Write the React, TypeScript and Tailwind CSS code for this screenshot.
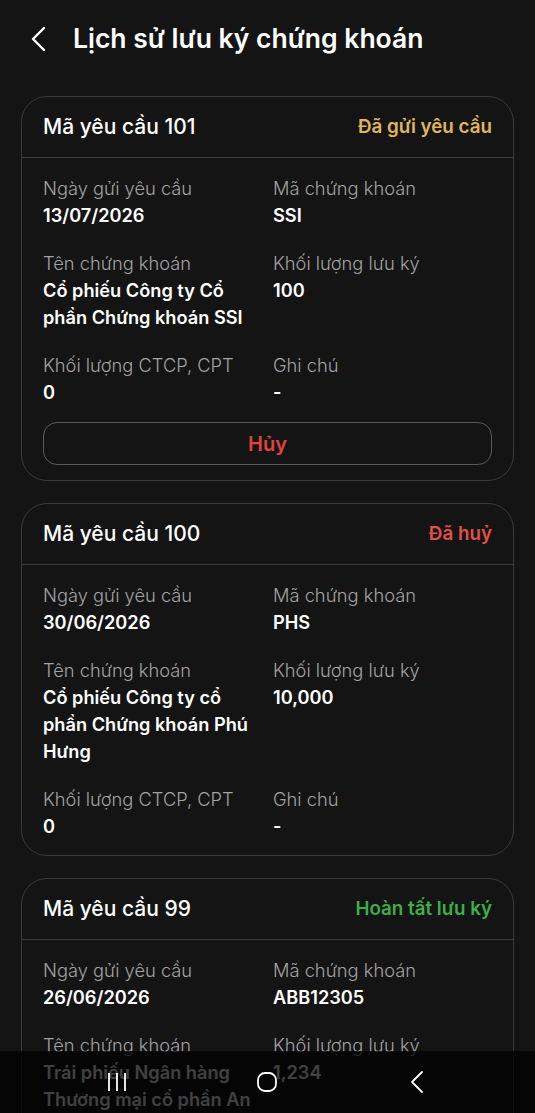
import React from 'react';

type Field = { label: string; value: string };

interface RequestCardProps {
  code: string;
  status: string;
  statusColor: string;
  fields: Field[];
  cancellable?: boolean;
}

const RequestCard: React.FC<RequestCardProps> = ({ code, status, statusColor, fields, cancellable }) => {
  return (
    <div className="rounded-[26px] border border-[#3a3a3a]">
      <div className="flex h-[61px] items-center justify-between border-b border-[#3a3a3a] px-[21px]">
        <span className="text-[21px] font-medium text-white">{code}</span>
        <span className={`text-[18.8px] font-semibold ${statusColor}`}>{status}</span>
      </div>
      <div className="px-[21px] pt-[16px] pb-[15px]">
        <div className="grid grid-cols-[230px_1fr] gap-y-[20px]">
          {fields.map(f => (
            <div key={f.label} className="pr-2">
              <div className="text-[18.3px] leading-[28px] font-light text-[#a3a3a3]">{f.label}</div>
              <div className="text-[18.2px] leading-[27px] font-semibold text-white">{f.value}</div>
            </div>
          ))}
        </div>
        {cancellable && (
          <button className="mt-[16px] flex h-[43px] w-full items-center justify-center rounded-[14px] border border-[#5a5a5a] text-[20px] font-semibold text-[#e0443e]">
            Hủy
          </button>
        )}
      </div>
    </div>
  );
};

const cards: RequestCardProps[] = [
  {
    code: 'Mã yêu cầu 101',
    status: 'Đã gửi yêu cầu',
    statusColor: 'text-[#e0b65c]',
    cancellable: true,
    fields: [
      { label: 'Ngày gửi yêu cầu', value: '13/07/2026' },
      { label: 'Mã chứng khoán', value: 'SSI' },
      { label: 'Tên chứng khoán', value: 'Cổ phiếu Công ty Cổ phần Chứng khoán SSI' },
      { label: 'Khối lượng lưu ký', value: '100' },
      { label: 'Khối lượng CTCP, CPT', value: '0' },
      { label: 'Ghi chú', value: '-' },
    ],
  },
  {
    code: 'Mã yêu cầu 100',
    status: 'Đã huỷ',
    statusColor: 'text-[#e2504a]',
    fields: [
      { label: 'Ngày gửi yêu cầu', value: '30/06/2026' },
      { label: 'Mã chứng khoán', value: 'PHS' },
      { label: 'Tên chứng khoán', value: 'Cổ phiếu Công ty cổ phần Chứng khoán Phú Hưng' },
      { label: 'Khối lượng lưu ký', value: '10,000' },
      { label: 'Khối lượng CTCP, CPT', value: '0' },
      { label: 'Ghi chú', value: '-' },
    ],
  },
  {
    code: 'Mã yêu cầu 99',
    status: 'Hoàn tất lưu ký',
    statusColor: 'text-[#3fae48]',
    fields: [
      { label: 'Ngày gửi yêu cầu', value: '26/06/2026' },
      { label: 'Mã chứng khoán', value: 'ABB12305' },
      { label: 'Tên chứng khoán', value: 'Trái phiếu Ngân hàng Thương mại cổ phần An Bình' },
      { label: 'Khối lượng lưu ký', value: '1,234' },
      { label: 'Khối lượng CTCP, CPT', value: '0' },
      { label: 'Ghi chú', value: '-' },
    ],
  },
];

export default function App() {
  return (
    <div className="relative h-[1113px] w-[535px] overflow-hidden bg-[#141414] font-['Inter',sans-serif]">
      <div className="flex h-[78px] items-center">
        <button className="ml-[27px] flex h-[30px] w-[22px] items-center justify-center">
          <svg width="16" height="26" viewBox="0 0 16 26" fill="none">
            <path d="M14 2 L3 13 L14 24" stroke="white" strokeWidth="2.4" strokeLinecap="round" strokeLinejoin="round" />
          </svg>
        </button>
        <h1 className="ml-[24px] text-[26.5px] font-semibold text-white">Lịch sử lưu ký chứng khoán</h1>
      </div>

      <div className="mt-[18px] flex flex-col gap-[22px] px-[21px]">
        {cards.map(c => (
          <RequestCard key={c.code} {...c} />
        ))}
      </div>

      {/* system navigation bar */}
      <div className="absolute bottom-0 left-0 flex h-[62px] w-full items-center gap-[90px] bg-black/75 pl-[87px]">
        <div className="flex w-[60px] justify-center">
          <svg width="22" height="22" viewBox="0 0 22 22" fill="none">
            <path d="M3 2 V20 M11 2 V20 M19 2 V20" stroke="white" strokeWidth="1.8" />
          </svg>
        </div>
        <div className="flex w-[60px] justify-center">
          <svg width="22" height="22" viewBox="0 0 22 22" fill="none">
            <rect x="2" y="2" width="18" height="18" rx="7" stroke="white" strokeWidth="1.8" />
          </svg>
        </div>
        <div className="flex w-[60px] justify-center">
          <svg width="14" height="24" viewBox="0 0 14 24" fill="none">
            <path d="M12 2 L2 12 L12 22" stroke="white" strokeWidth="1.8" strokeLinecap="round" strokeLinejoin="round" />
          </svg>
        </div>
      </div>
    </div>
  );
}
